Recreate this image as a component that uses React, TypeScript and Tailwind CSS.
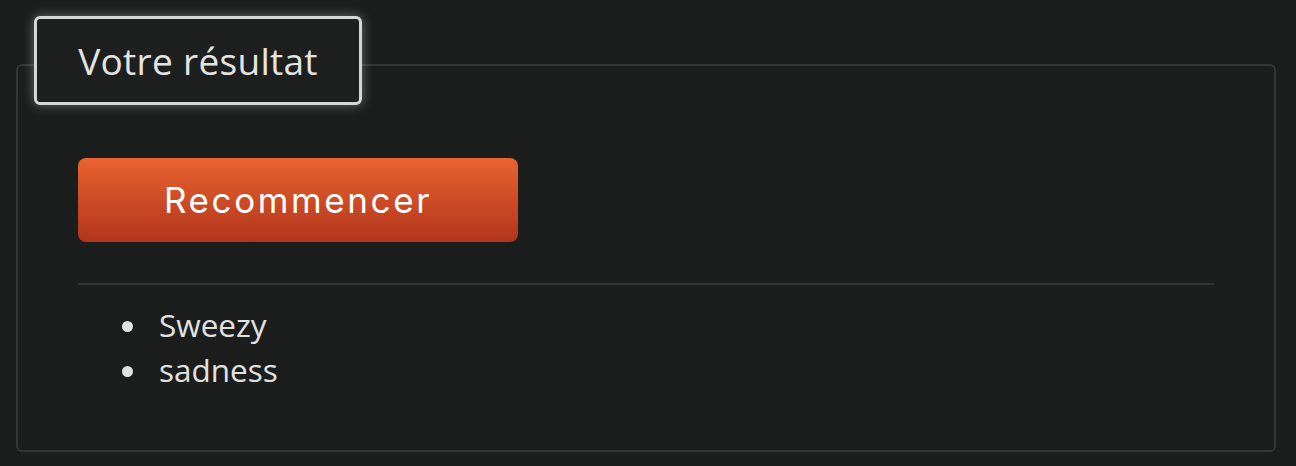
import React from 'react';

const players = ['Sweezy', 'sadness'];

const App: React.FC = () => {
  return (
    <div className="min-h-[466px] w-full bg-[#1c1e1d] pl-4 pr-5 pt-4 font-['Open_Sans',sans-serif]">
      {/* Legend tab */}
      <div className="relative z-10 ml-[18px] inline-flex h-[89px] w-[328px] items-center justify-center rounded-[6px] border-[3px] border-[#d6d7d6] bg-[#1e201f] shadow-[0_0_12px_rgba(255,255,255,0.35)]">
        <span className="text-[37px] leading-none tracking-[0.3px] text-[#e4e4e4] font-['Open_Sans',sans-serif]">Votre résultat</span>
      </div>

      {/* Result card */}
      <div className="-mt-[41px] h-[388px] rounded-[6px] border-2 border-[#343635] bg-[#1c1e1d] px-[60px] pt-[92px]">
        <button className="flex h-[84px] w-[440px] items-center justify-center rounded-[8px] bg-gradient-to-b from-[#ea6330] to-[#b1351c] text-[35px] tracking-[2.6px] text-white font-['Inter',sans-serif]">
          Recommencer
        </button>

        <div className="mt-[41px] h-[2px] w-full bg-[#333534]" />

        <ul className="mt-[17px] list-disc pl-[73px] text-[31.5px] leading-[45px] text-[#e2e2e2] marker:text-[#e2e2e2]">
          {players.map((name) => (
            <li key={name} className="pl-[8px]">{name}</li>
          ))}
        </ul>
      </div>
    </div>
  );
};

export default App;
